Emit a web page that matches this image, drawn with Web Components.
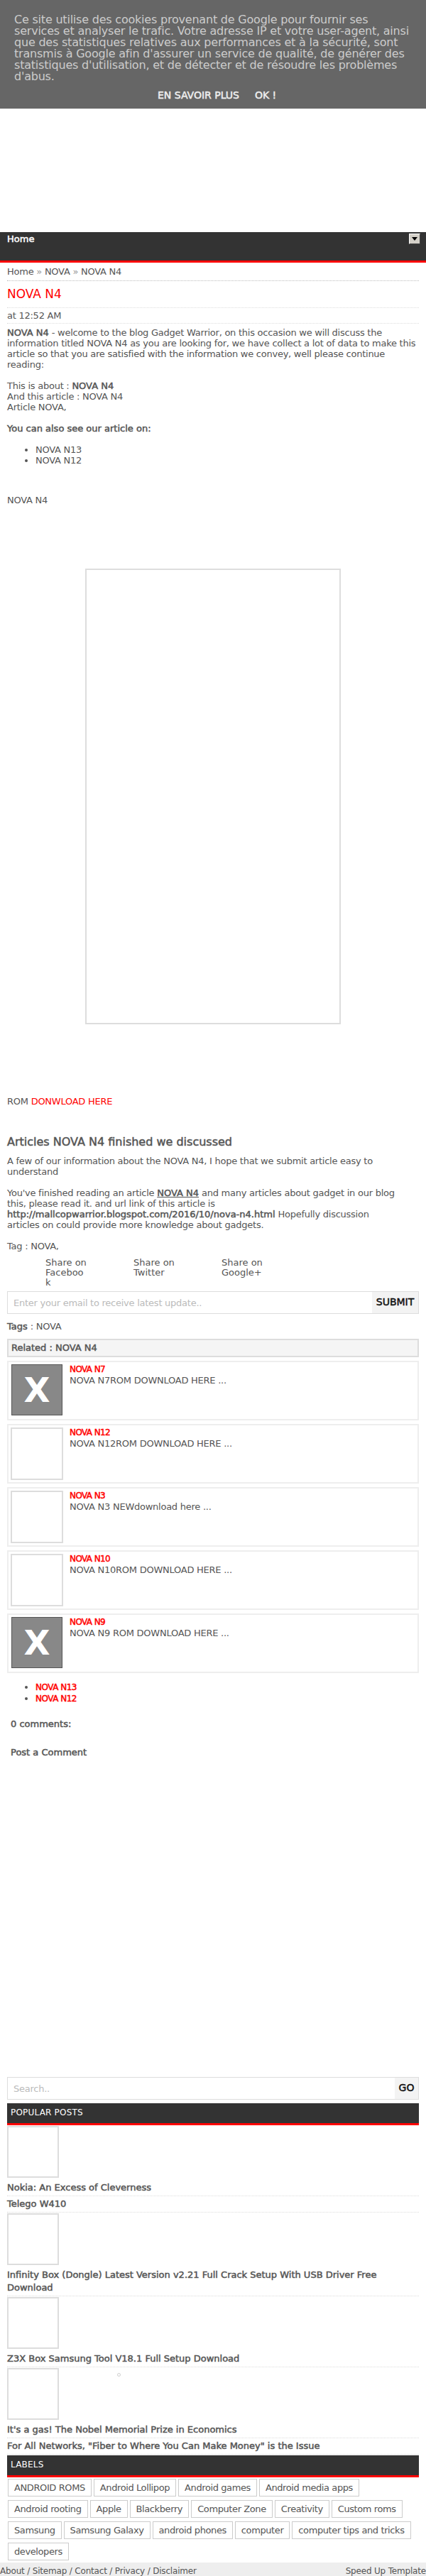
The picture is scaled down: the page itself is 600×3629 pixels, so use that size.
<!DOCTYPE html>
<html>
<head>
<meta charset="utf-8">
<title>NOVA N4</title>
<style>
    html, body { margin: 0; padding: 0; background: #fff; }
    body { font-family: "DejaVu Sans", sans-serif; font-size: 13px; color: #555; }
</style>
</head>
<body>
<cookie-bar></cookie-bar>
<main-nav></main-nav>
<blog-post></blog-post>
<related-list></related-list>
<post-comments></post-comments>
<side-bar></side-bar>
<site-footer></site-footer>

<script>
const FONT = '"DejaVu Sans", sans-serif';
// the original renders bold as a thickened regular face, widths stay regular
const BOLD = 'font-weight: 400; letter-spacing: 0; -webkit-text-stroke: 0.5px currentColor;';
const TIGHT = 'letter-spacing: -0.25px;';

class CookieBar extends HTMLElement {
    connectedCallback() {
        this.attachShadow({ mode: 'open' });
        this.shadowRoot.innerHTML = `
            <style>
                :host { display: block; position: absolute; top: 0; left: 0; width: 600px; height: 153px; background: #666; color: #ccc; font-family: ${FONT}; }
                p { margin: 0; padding: 20px 20px 0; font-size: 16px; line-height: 16px; letter-spacing: -0.21px; }
                .buttons { display: flex; gap: 22px; margin-top: 10px; padding-left: 222px; font-size: 14px; color: #eee; line-height: 16px; ${BOLD} }
            </style>
            <p>Ce site utilise des cookies provenant de Google pour fournir ses services et analyser le trafic. Votre adresse IP et votre user-agent, ainsi que des statistiques relatives aux performances et à la sécurité, sont transmis à Google afin d'assurer un service de qualité, de générer des statistiques d'utilisation, et de détecter et de résoudre les problèmes d'abus.</p>
            <div class="buttons"><span>EN SAVOIR PLUS</span><span>OK !</span></div>`;
    }
}

class MainNav extends HTMLElement {
    connectedCallback() {
        this.attachShadow({ mode: 'open' });
        this.shadowRoot.innerHTML = `
            <style>
                :host { display: block; margin-top: 327px; position: relative; height: 40px; background: #333; border-bottom: 3px solid #f00; color: #fff; font: 13px/20px ${FONT}; }
                .home { padding-left: 10px; ${BOLD} }
                .toggle { box-sizing: border-box; position: absolute; right: 8px; top: 2px; width: 16px; height: 15px; background: #d4d0c8; border: 1px solid; border-color: #fff #444 #444 #fff; display: flex; align-items: center; justify-content: center; }
                .toggle i { width: 0; height: 0; border: 4px solid transparent; border-top: 5px solid #000; border-bottom: 0; }
            </style>
            <div class="home">Home</div>
            <div class="toggle"><i></i></div>`;
    }
}

class BlogPost extends HTMLElement {
    connectedCallback() {
        this.attachShadow({ mode: 'open' });
        this.shadowRoot.innerHTML = `
            <style>
                :host { display: block; padding: 0 10px; font-family: ${FONT}; font-size: 13px; line-height: 15px; color: #555; ${TIGHT} }
                b { ${BOLD} }
                .crumbs { height: 25px; line-height: 26px; border-bottom: 1px dotted #bbb; }
                .crumbs span { color: #999; }
                h1 { margin: 0; height: 37px; font: 400 17px/37px ${FONT}; letter-spacing: 0; color: #f00; border-bottom: 1px dotted #ddd; }
                .date { height: 21px; line-height: 22px; border-bottom: 1px dotted #ddd; }
                .body { padding-top: 5px; }
                ul { margin: 15px 0 0; padding-left: 40px; }
                .spacer { height: 41px; }
                .frame { width: 356px; height: 638px; border: 2px solid #ddd; margin: 89px auto 0; }
                .rom { margin-top: 101px; }
                .rom a { color: #f00; }
                h2 { margin: 40px 0 0; font: 400 16px/20px ${FONT}; color: #555; ${BOLD} }
                .after { margin-top: 9px; }
                .after u { ${BOLD} }
                .share { display: flex; margin: 9px 0 0 54px; line-height: 14px; letter-spacing: 0; }
                .share div { width: 124px; }
                .share span { display: block; width: 60px; word-break: break-all; }
                .sub { display: flex; height: 30px; margin-top: 5px; border: 1px solid #ddd; }
                .sub .ph { flex: 1; padding-left: 8px; color: #bbb; line-height: 32px; }
                .sub .btn { width: 65px; background: #f3f3f3; color: #111; text-align: center; font-size: 14px; line-height: 28px; ${BOLD} }
                .tags { margin-top: 10px; }
            </style>
            <div class="crumbs">Home <span>»</span> NOVA <span>»</span> NOVA N4</div>
            <h1>NOVA N4</h1>
            <div class="date">at 12:52 AM</div>
            <div class="body">
                <b>NOVA N4</b> - welcome to the blog Gadget Warrior, on this occasion we will discuss the information titled NOVA N4 as you are looking for, we have collect a lot of data to make this article so that you are satisfied with the information we convey, well please continue reading:<br><br>
                This is about : <b>NOVA N4</b><br>And this article : NOVA N4<br>Article NOVA,<br><br>
                <b>You can also see our article on:</b>
                <ul><li>NOVA N13</li><li>NOVA N12</li></ul>
                <div class="spacer"></div>
                NOVA N4
                <div class="frame"></div>
                <div class="rom">ROM <a>DONWLOAD HERE</a></div>
                <h2>Articles NOVA N4 finished we discussed</h2>
                <div class="after">A few of our information about the NOVA N4, I hope that we submit article easy to understand<br><br>
                You've finished reading an article <u>NOVA N4</u> and many articles about gadget in our blog<br>this, please read it. and url link of this article is<br><b>http://mallcopwarrior.blogspot.com/2016/10/nova-n4.html</b> Hopefully discussion<br>articles on could provide more knowledge about gadgets.<br><br>
                Tag : NOVA,</div>
                <div class="share"><div><span>Share on Facebook</span></div><div><span>Share on Twitter</span></div><div><span>Share on Google+</span></div></div>
                <div class="sub"><div class="ph">Enter your email to receive latest update..</div><div class="btn">SUBMIT</div></div>
                <div class="tags"><b>Tags</b> : NOVA</div>
            </div>`;
    }
}

class RelatedItem extends HTMLElement {
    connectedCallback() {
        const empty = this.hasAttribute('empty');
        this.attachShadow({ mode: 'open' });
        this.shadowRoot.innerHTML = `
            <style>
                :host { display: flex; height: 80px; margin-top: 5px; border: 2px solid #eee; font-family: ${FONT}; font-size: 13px; ${TIGHT} }
                .thumb { box-sizing: border-box; flex: none; }
                .thumb.x { margin: 3px 10px 0 4px; width: 72px; height: 72px; background: #888; border: 1px solid #555; color: #fff; display: flex; align-items: center; justify-content: center; font: 700 48px/1 ${FONT}; letter-spacing: 0; }
                .thumb.none { margin: 3px 9px 0 3px; width: 74px; height: 74px; border: 2px solid #ddd; }
                .text { margin-top: 2px; line-height: 16px; }
                b { display: block; color: #f00; font-size: 12px; ${BOLD} letter-spacing: -0.6px; }
            </style>
            <div class="thumb ${empty ? 'none' : 'x'}">${empty ? '' : 'X'}</div>
            <div class="text"><b>${this.getAttribute('name')}</b>${this.getAttribute('text')}</div>`;
    }
}

class RelatedList extends HTMLElement {
    connectedCallback() {
        this.attachShadow({ mode: 'open' });
        const rows = [
            ['NOVA N7', 'NOVA N7ROM DOWNLOAD HERE ...', false],
            ['NOVA N12', 'NOVA N12ROM DOWNLOAD HERE ...', true],
            ['NOVA N3', 'NOVA N3 NEWdownload here ...', true],
            ['NOVA N10', 'NOVA N10ROM DOWNLOAD HERE ...', true],
            ['NOVA N9', 'NOVA N9 ROM DOWNLOAD HERE ...', false]
        ];
        this.shadowRoot.innerHTML = `
            <style>
                :host { display: block; padding: 0 10px; font-family: ${FONT}; font-size: 13px; color: #555; }
                .head { height: 22px; margin-top: 10px; padding-left: 4px; background: #f5f5f5; border: 2px solid #ddd; line-height: 22px; ${BOLD} }
                ul { margin: 12px 0 0; padding-left: 40px; line-height: 15px; }
                li b { color: #f00; font-size: 12px; ${BOLD} letter-spacing: -0.5px; }
            </style>
            <div class="head">Related : NOVA N4</div>
            ${rows.map(r => `<related-item name="${r[0]}" text="${r[1]}" ${r[2] ? 'empty' : ''}></related-item>`).join('')}
            <ul><li><b>NOVA N13</b></li><li><b>NOVA N12</b></li></ul>`;
    }
}

class PostComments extends HTMLElement {
    connectedCallback() {
        this.attachShadow({ mode: 'open' });
        this.shadowRoot.innerHTML = `
            <style>
                :host { display: block; padding-left: 15px; height: 525px; font: 13px/15px ${FONT}; color: #555; ${BOLD} }
                div { padding-top: 20px; }
                div + div { padding-top: 25px; }
            </style>
            <div>0 comments:</div>
            <div>Post a Comment</div>`;
    }
}

class SideBar extends HTMLElement {
    connectedCallback() {
        this.attachShadow({ mode: 'open' });
        const labels = ['ANDROID ROMS', 'Android Lollipop', 'Android games', 'Android media apps', 'Android rooting', 'Apple', 'Blackberry', 'Computer Zone', 'Creativity', 'Custom roms', 'Samsung', 'Samsung Galaxy', 'android phones', 'computer', 'computer tips and tricks', 'developers'];
        const popular = (title, thumb) => `<div class="pop">${thumb ? '<div class="pthumb"></div>' : ''}<div class="ptitle">${title}</div></div>`;
        this.shadowRoot.innerHTML = `
            <style>
                :host { display: block; position: relative; padding: 0 10px; font-family: ${FONT}; font-size: 13px; color: #555; }
                .search { display: flex; height: 30px; border: 1px solid #ddd; }
                .search .ph { flex: 1; padding-left: 8px; color: #bbb; line-height: 32px; ${TIGHT} }
                .search .btn { width: 33px; background: #f3f3f3; color: #111; text-align: center; font-size: 14px; line-height: 28px; ${BOLD} }
                .bar { height: 28px; margin-top: 5px; padding-left: 5px; background: #333; border-bottom: 3px solid #f00; color: #fff; font-size: 12px; letter-spacing: 0.2px; line-height: 26px; }
                .pop { border-bottom: 1px dotted #ddd; padding: 2px 0; }
                .pop:last-of-type { border-bottom: 0; }
                .pthumb { box-sizing: border-box; width: 73px; height: 73px; margin: -1px 0 5px; border: 2px solid #ddd; }
                .ptitle { line-height: 18px; ${BOLD} }
                .labels { display: flex; flex-wrap: wrap; gap: 5px 3px; padding: 2px 0 0 1px; letter-spacing: -0.4px; }
                .labels span { padding: 0 8px; height: 23px; line-height: 24px; border: 1px solid #ccc; }
                .spinner { position: absolute; left: 165px; top: 417px; box-sizing: border-box; width: 5px; height: 5px; border: 1px solid #ccc; border-radius: 50%; }
            </style>
            <div class="search"><div class="ph">Search..</div><div class="btn">GO</div></div>
            <div class="bar">POPULAR POSTS</div>
            ${popular('Nokia: An Excess of Cleverness', true)}
            ${popular('Telego W410', false)}
            ${popular('Infinity Box (Dongle) Latest Version v2.21 Full Crack Setup With USB Driver Free Download', true)}
            ${popular('Z3X Box Samsung Tool V18.1 Full Setup Download', true)}
            ${popular("It's a gas! The Nobel Memorial Prize in Economics", true)}
            ${popular('For All Networks, "Fiber to Where You Can Make Money" is the Issue', false)}
            <div class="bar" style="margin-top:1px">LABELS</div>
            <div class="labels">${labels.map(l => `<span>${l}</span>`).join('')}</div>
            <div class="spinner"></div>`;
    }
}

class SiteFooter extends HTMLElement {
    connectedCallback() {
        this.attachShadow({ mode: 'open' });
        this.shadowRoot.innerHTML = `
            <style>
                :host { display: flex; justify-content: space-between; height: 23px; margin-top: 3px; background: #eee; color: #555; font: 12px/24px ${FONT}; letter-spacing: -0.18px; }
            </style>
            <span>About / Sitemap / Contact / Privacy / Disclaimer</span>
            <span>Speed Up Template</span>`;
    }
}

customElements.define('cookie-bar', CookieBar);
customElements.define('main-nav', MainNav);
customElements.define('blog-post', BlogPost);
customElements.define('related-item', RelatedItem);
customElements.define('related-list', RelatedList);
customElements.define('post-comments', PostComments);
customElements.define('side-bar', SideBar);
customElements.define('site-footer', SiteFooter);
</script>
</body>
</html>
